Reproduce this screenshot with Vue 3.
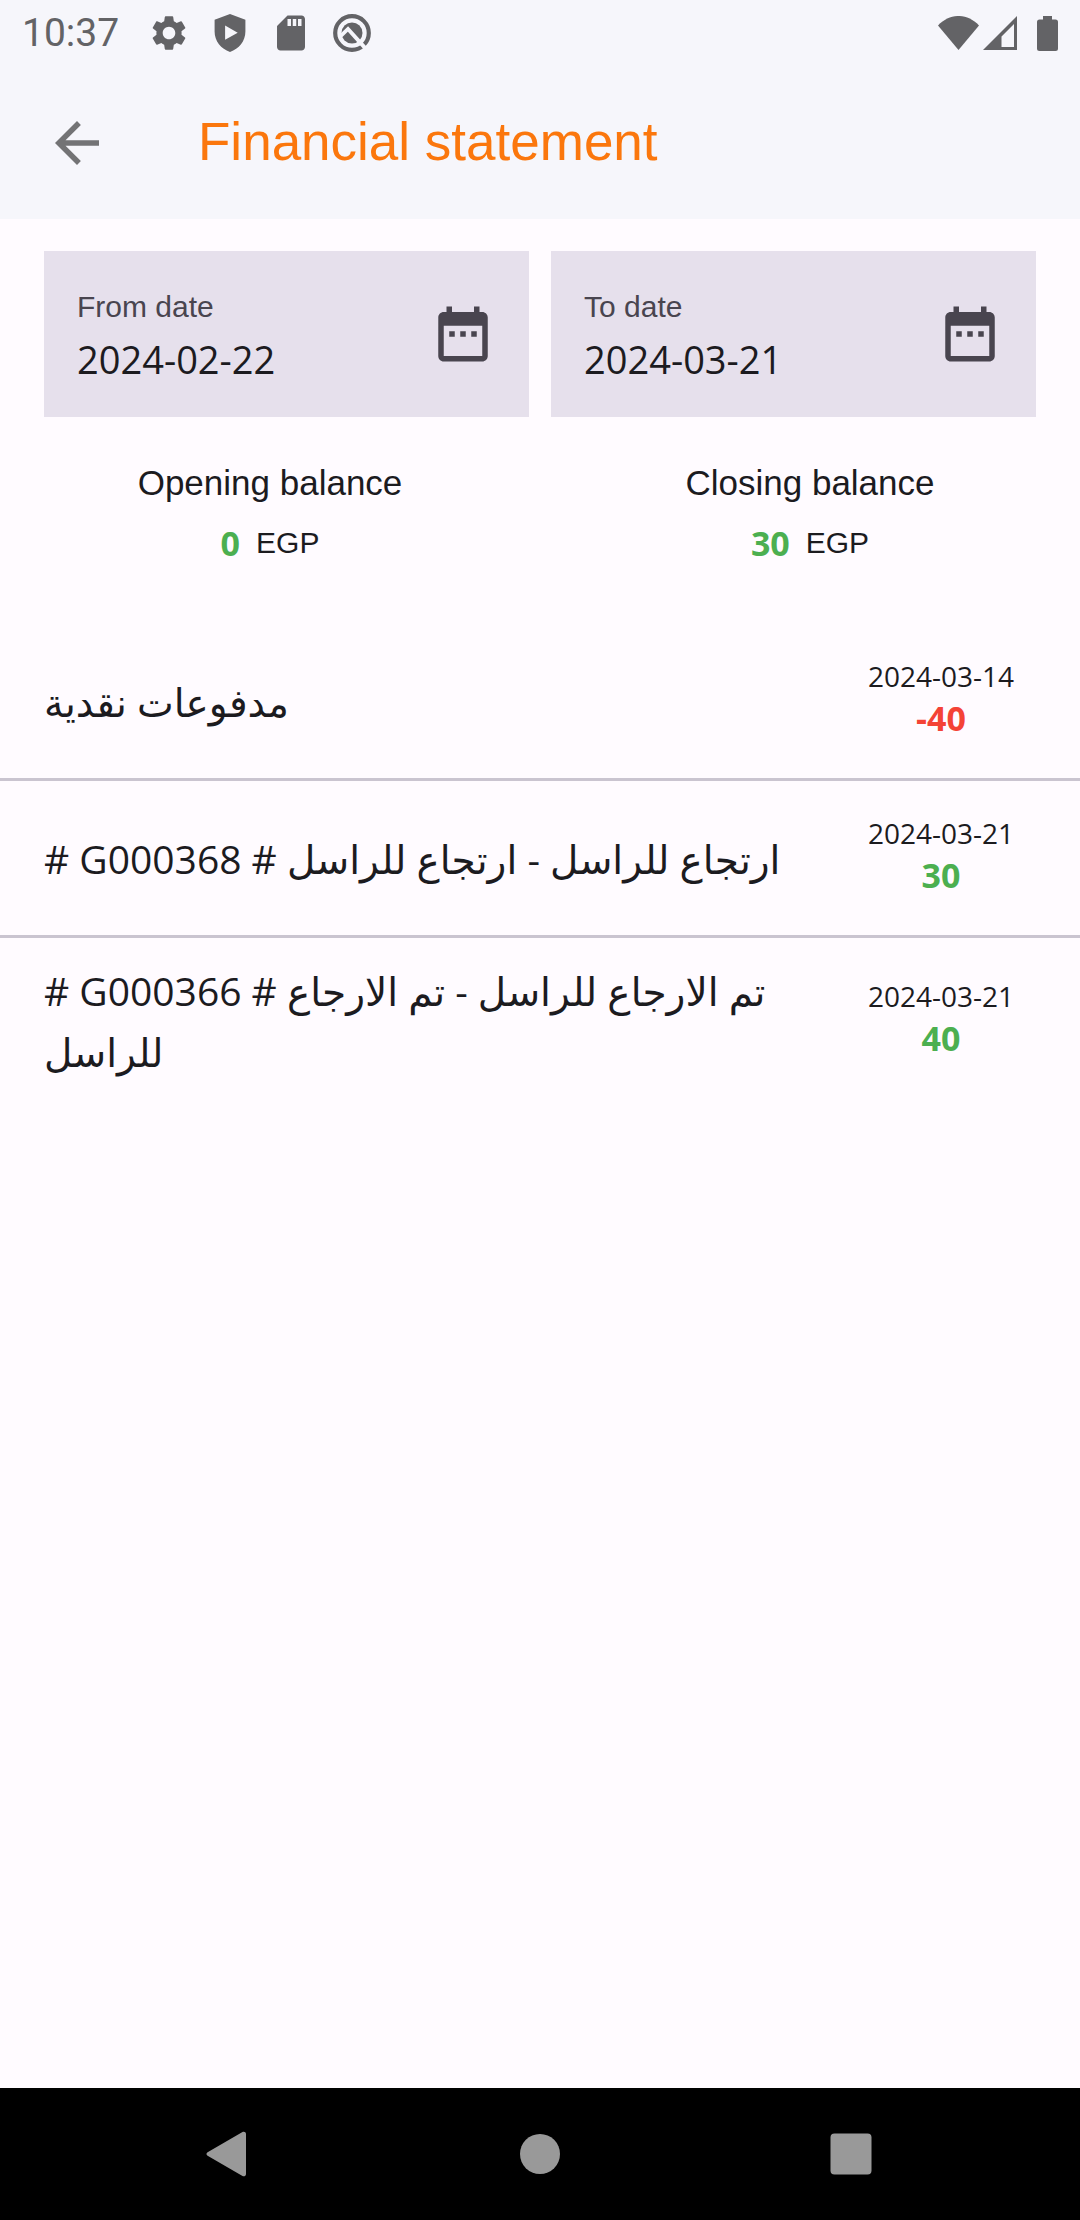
<script setup>
import { ref } from 'vue'

const fromDate = ref('2024-02-22')
const toDate = ref('2024-03-21')

const balances = [
  { label: 'Opening balance', value: 0 },
  { label: 'Closing balance', value: 30 },
]

const entries = [
  { id: 1, text: 'مدفوعات نقدية', date: '2024-03-14', amount: -40 },
  { id: 2, text: '# G000368 # ارتجاع للراسل - ارتجاع للراسل', date: '2024-03-21', amount: 30 },
  { id: 3, text: '# G000366 # تم الارجاع للراسل - تم الارجاع للراسل', date: '2024-03-21', amount: 40 },
]
</script>

<template>
  <div class="screen">
    <div class="status-bar">
      <span class="clock">10:37</span>
      <div class="status-left">
        <svg viewBox="0 0 24 24"><path d="M19.14 12.94c.04-.3.06-.61.06-.94 0-.32-.02-.64-.07-.94l2.03-1.58a.49.49 0 0 0 .12-.61l-1.92-3.32a.488.488 0 0 0-.59-.22l-2.39.96c-.5-.38-1.03-.7-1.62-.94l-.36-2.54a.484.484 0 0 0-.48-.41h-3.84c-.24 0-.43.17-.47.41l-.36 2.54c-.59.24-1.13.57-1.62.94l-2.39-.96c-.22-.08-.47 0-.59.22L2.74 8.87c-.12.21-.08.47.12.61l2.03 1.58c-.05.3-.09.63-.09.94s.02.64.07.94l-2.03 1.58a.49.49 0 0 0-.12.61l1.92 3.32c.12.22.37.29.59.22l2.39-.96c.5.38 1.03.7 1.62.94l.36 2.54c.05.24.24.41.48.41h3.84c.24 0 .44-.17.47-.41l.36-2.54c.59-.24 1.13-.56 1.62-.94l2.39.96c.22.08.47 0 .59-.22l1.92-3.32c.12-.22.07-.47-.12-.61l-2.01-1.58zM12 15.6c-1.98 0-3.6-1.62-3.6-3.6s1.62-3.6 3.6-3.6 3.6 1.62 3.6 3.6-1.62 3.6-3.6 3.6z" /></svg>
        <svg viewBox="0 0 24 24"><path fill-rule="evenodd" d="M12 1.2 3.2 4.4v6.8c0 5.5 3.7 9.9 8.8 11.7 5.1-1.8 8.8-6.2 8.8-11.7V4.4zM9.2 7.7v8.2l7.2-4.1z" /></svg>
        <svg viewBox="0 0 24 24"><path d="M18 2h-8L4.02 8 4 20c0 1.1.9 2 2 2h12c1.1 0 2-.9 2-2V4c0-1.1-.9-2-2-2zm-6 6h-2V4h2v4zm3 0h-2V4h2v4zm3 0h-2V4h2v4z" /></svg>
        <svg class="quick" viewBox="0 0 24 24">
          <circle class="ring" cx="12" cy="12" r="9.6" />
          <circle cx="12" cy="12" r="6" />
          <path class="cut" d="M4.6 14.6 9.7 9.7 20.6 21.8" />
        </svg>
      </div>
      <div class="status-right">
        <svg class="wifi" viewBox="0 0 41 34"><path d="M0 9.5C12-3.2 29-3.2 41 9.5L20.5 34z" /></svg>
        <svg class="signal" viewBox="0 0 34 34"><path fill-rule="evenodd" d="M34 0v34H0zM31 8 18.5 20.5V31H31z" /></svg>
        <svg class="battery" viewBox="0 0 21 35"><path d="M6 0h9v3.5h3.5A2.5 2.5 0 0 1 21 6v26.5a2.5 2.5 0 0 1-2.5 2.5h-16A2.5 2.5 0 0 1 0 32.5V6a2.5 2.5 0 0 1 2.5-2.5H6z" /></svg>
      </div>
    </div>

    <header class="app-bar">
      <button type="button" class="icon-btn back" aria-label="Back">
        <svg viewBox="0 0 24 24"><path d="M20 11H7.83l5.59-5.59L12 4l-8 8 8 8 1.41-1.41L7.83 13H20v-2z" /></svg>
      </button>
      <h1 class="title">Financial statement</h1>
    </header>

    <main class="content">
      <div class="date-row">
        <div class="date-card">
          <div class="date-field">
            <label for="from-date">From date</label>
            <input id="from-date" v-model="fromDate" type="text" readonly />
          </div>
          <button type="button" class="icon-btn" aria-label="Pick from date">
            <svg viewBox="0 0 24 24"><path d="M9 11H7v2h2v-2zm4 0h-2v2h2v-2zm4 0h-2v2h2v-2zm2-7h-1V2h-2v2H8V2H6v2H5c-1.11 0-1.99.9-1.99 2L3 20c0 1.1.89 2 2 2h14c1.1 0 2-.9 2-2V6c0-1.1-.9-2-2-2zm0 16H5V9h14v11z" /></svg>
          </button>
        </div>
        <div class="date-card">
          <div class="date-field">
            <label for="to-date">To date</label>
            <input id="to-date" v-model="toDate" type="text" readonly />
          </div>
          <button type="button" class="icon-btn" aria-label="Pick to date">
            <svg viewBox="0 0 24 24"><path d="M9 11H7v2h2v-2zm4 0h-2v2h2v-2zm4 0h-2v2h2v-2zm2-7h-1V2h-2v2H8V2H6v2H5c-1.11 0-1.99.9-1.99 2L3 20c0 1.1.89 2 2 2h14c1.1 0 2-.9 2-2V6c0-1.1-.9-2-2-2zm0 16H5V9h14v11z" /></svg>
          </button>
        </div>
      </div>

      <div class="balances">
        <div v-for="b in balances" :key="b.label" class="balance">
          <div class="balance-label">{{ b.label }}</div>
          <div class="balance-value">
            <span class="amount">{{ b.value }}</span>
            <span class="currency">EGP</span>
          </div>
        </div>
      </div>

      <ul class="entries">
        <li v-for="e in entries" :key="e.id" class="entry">
          <p class="entry-text">{{ e.text }}</p>
          <div class="entry-side">
            <span class="entry-date">{{ e.date }}</span>
            <span class="amount" :class="{ negative: e.amount < 0 }">{{ e.amount }}</span>
          </div>
        </li>
      </ul>
    </main>

    <nav class="nav-bar">
      <button type="button" aria-label="Back">
        <svg viewBox="0 0 48 48"><path d="M2.600 22.200 37.500 2c1.500-.8 3.500 0 3.500 2v40c0 2-2 2.800-3.500 2L2.600 25.800c-1.500-.9-1.500-2.700 0-3.600z" /></svg>
      </button>
      <button type="button" aria-label="Home">
        <svg viewBox="0 0 48 48"><circle cx="24" cy="24" r="20" /></svg>
      </button>
      <button type="button" aria-label="Recent apps">
        <svg viewBox="0 0 48 48"><rect x="3.5" y="3.5" width="41" height="41" rx="4" /></svg>
      </button>
    </nav>
  </div>
</template>

<style>
body { margin: 0; background: #fffbff; }
</style>

<style scoped>
.screen { min-height: 100vh; display: flex; flex-direction: column; background: #fffbff; color: #1c1b1f; font-family: "Liberation Sans", "DejaVu Sans", sans-serif; }
.screen svg { display: block; fill: currentColor; }
button { border: 0; padding: 0; margin: 0; background: none; color: inherit; cursor: pointer; }

.status-bar { display: flex; align-items: center; height: 66px; padding: 0 22px; background: #f6f6fb; color: #636366; }
.clock { font: 400 39px/66px Roboto, sans-serif; }
.status-left { display: flex; gap: 19px; margin-left: 29px; }
.status-left svg { width: 42px; height: 42px; }
.quick .ring { fill: none; stroke: currentColor; stroke-width: 2.4; }
.quick .cut { fill: none; stroke: #f6f6fb; stroke-width: 2.2; }
.status-right { display: flex; align-items: center; margin-left: auto; }
.wifi { width: 41px; height: 34px; }
.signal { width: 34px; height: 34px; margin: 0 20px 0 4px; }
.battery { width: 21px; height: 35px; }

.app-bar { display: flex; align-items: center; gap: 88px; height: 153px; padding: 0 44px; background: #f6f6fb; }
.icon-btn { flex: none; width: 66px; height: 66px; color: #49454f; }
.icon-btn.back { color: #737375; }
.title { margin: 0; padding-bottom: 2px; font-size: 53px; font-weight: 400; line-height: 64px; color: #fb770d; }

.content { flex: 1; }
.date-row { display: grid; grid-template-columns: 1fr 1fr; gap: 22px; padding: 32px 44px 0; }
.date-card { display: flex; align-items: center; padding: 0 33px; background: #e6e0ec; }
.date-field { flex: 1; min-width: 0; padding: 36px 0 26px; }
.date-field label { display: block; font-size: 30px; line-height: 40px; color: #49454f; }
.date-field input { display: block; width: 100%; height: 64px; padding: 0; border: 0; outline: 0; background: none; color: #1c1b1f; font: 400 38px/64px "Open Sans", sans-serif; }

.balances { display: grid; grid-template-columns: 1fr 1fr; padding: 40px 0 57px; text-align: center; }
.balance-label { font-size: 35px; line-height: 52px; }
.balance-value { display: flex; justify-content: center; gap: 16px; margin-top: 10px; line-height: 48px; }
.currency { font-size: 30px; }
.amount { font-family: "Open Sans", sans-serif; font-size: 34px; font-weight: 700; color: #4caf50; }
.amount.negative { color: #f44336; }

.entries { margin: 0; padding: 0; list-style: none; }
.entry { display: flex; align-items: center; gap: 44px; box-sizing: border-box; min-height: 157px; padding: 22px 66px 22px 44px; border-bottom: 3px solid #cac4d0; }
.entry:last-child { border-bottom: 0; }
.entry-text { flex: 1; margin: 0; font: 400 39px/61px "Open Sans", "DejaVu Sans", sans-serif; }
.entry-side { display: flex; flex-direction: column; align-items: center; padding-bottom: 6px; }
.entry-date { font: 400 28px/40px "Open Sans", sans-serif; }
.entry-side .amount { line-height: 44px; }

.nav-bar { display: flex; justify-content: space-between; align-items: center; height: 132px; padding: 0 19%; background: #000; color: #999; }
.nav-bar svg { width: 48px; height: 48px; }
</style>
